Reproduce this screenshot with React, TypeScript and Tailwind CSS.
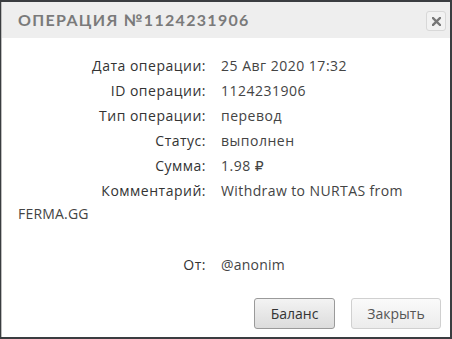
import React from 'react';

const rows: { label: string; value: string }[] = [
  { label: 'Дата операции:', value: '25 Авг 2020 17:32' },
  { label: 'ID операции:', value: '1124231906' },
  { label: 'Тип операции:', value: 'перевод' },
  { label: 'Статус:', value: 'выполнен' },
  { label: 'Сумма:', value: '1.98 ₽' },
];

const bodyFont = { fontFamily: '"Open Sans", "DejaVu Sans", sans-serif' };

const App: React.FC = () => {
  return (
    <div className="w-[452px] h-[339px] bg-[#3a3d40] pt-[2px] pb-[2px] pl-[1px] pr-[2px]">
      <div className="h-full bg-white border-l border-[#bdbdbd] flex flex-col">
        {/* header */}
        <div className="h-[36px] bg-[#eeeeee] flex items-center justify-between pl-[16px] pr-[4px]">
          <h2
            className="text-[16px] font-bold tracking-[1.3px] text-[#7a7a7a]"
            style={{ fontFamily: 'Lato, "Open Sans", sans-serif' }}
          >
            ОПЕРАЦИЯ №1124231906
          </h2>
          <button className="w-[20px] h-[20px] mt-[2px] rounded-[3px] border border-[#d8d8d8] bg-[#f2f2f2] flex items-center justify-center">
            <svg width="9" height="9" viewBox="0 0 9 9">
              <path d="M1 1 L8 8 M8 1 L1 8" stroke="#777" strokeWidth="2.4" strokeLinecap="square" />
            </svg>
          </button>
        </div>

        {/* body */}
        <div className="flex-1 pl-[16px] pr-[16px] pt-[15px] text-[14px] tracking-[0.5px] text-[#444]" style={bodyFont}>
          {rows.map((r) => (
            <div key={r.label} className="leading-[25px] h-[25px] whitespace-nowrap">
              <span className="inline-block w-[188px] text-right text-[#333]">{r.label}</span>
              <span className="ml-[15px]">{r.value}</span>
            </div>
          ))}
          <div className="leading-[23px] mt-[1px] whitespace-nowrap">
            <span className="inline-block w-[188px] text-right text-[#333]">Комментарий:</span>
            <span className="ml-[15px] tracking-[0.4px]">Withdraw to NURTAS from</span>
          </div>
          <div className="leading-[23px] tracking-[0.2px]">FERMA.GG</div>
          <div className="leading-[25px] mt-[27px] whitespace-nowrap">
            <span className="inline-block w-[188px] text-right text-[#333]">От:</span>
            <span className="ml-[15px] tracking-[0.2px]">@anonim</span>
          </div>

          {/* footer */}
          <div className="flex justify-end gap-[16px] mt-[21px] -mr-[7px] tracking-normal">
            <button className="w-[81px] h-[31px] rounded-[3px] border border-[#9a9a9a] bg-gradient-to-b from-[#f3f3f3] to-[#dcdcdc] text-[14px] text-[#333]">
              Баланс
            </button>
            <button className="w-[90px] h-[31px] rounded-[3px] border border-[#d0d0d0] bg-gradient-to-b from-[#fafafa] to-[#ececec] text-[14px] text-[#555]">
              Закрыть
            </button>
          </div>
        </div>
      </div>
    </div>
  );
};

export default App;
